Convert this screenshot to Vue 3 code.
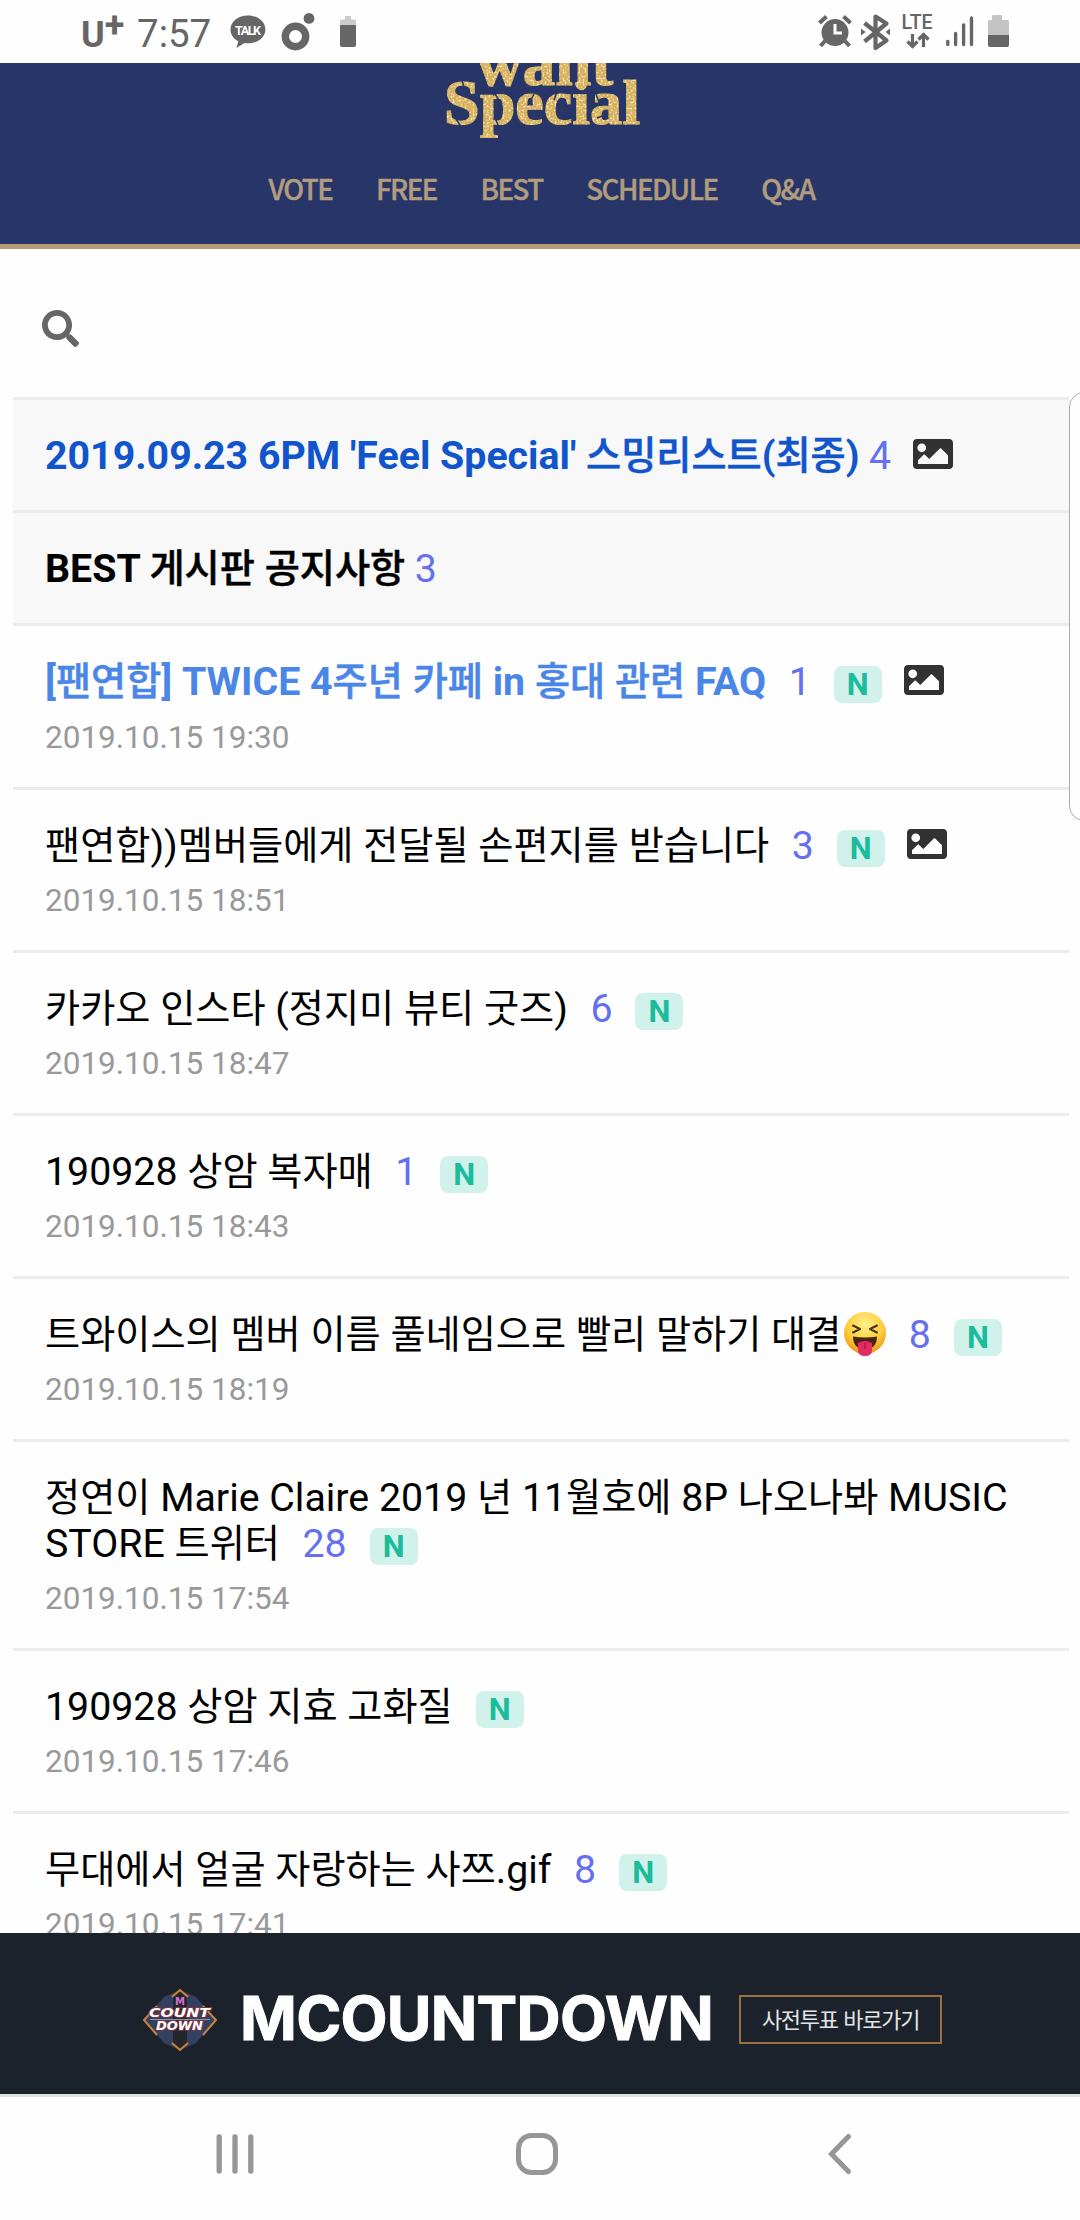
<script setup>
const menu = ['VOTE', 'FREE', 'BEST', 'SCHEDULE', 'Q&A']

const posts = [
  { title: "2019.09.23 6PM 'Feel Special' 스밍리스트(최종)", count: 4, photo: true, notice: true, tone: 'navy' },
  { title: 'BEST 게시판 공지사항', count: 3, notice: true, tone: 'strong' },
  { title: '[팬연합] TWICE 4주년 카페 in 홍대 관련 FAQ', count: 1, fresh: true, photo: true, tone: 'sky', date: '2019.10.15 19:30' },
  { title: '팬연합))멤버들에게 전달될 손편지를 받습니다', count: 3, fresh: true, photo: true, date: '2019.10.15 18:51' },
  { title: '카카오 인스타 (정지미 뷰티 굿즈)', count: 6, fresh: true, date: '2019.10.15 18:47' },
  { title: '190928 상암 복자매', count: 1, fresh: true, date: '2019.10.15 18:43' },
  { title: '트와이스의 멤버 이름 풀네임으로 빨리 말하기 대결', emoji: true, count: 8, fresh: true, date: '2019.10.15 18:19' },
  { title: '정연이 Marie Claire 2019 년 11월호에 8P 나오나봐 MUSIC STORE 트위터', count: 28, fresh: true, date: '2019.10.15 17:54' },
  { title: '190928 상암 지효 고화질', fresh: true, date: '2019.10.15 17:46' },
  { title: '무대에서 얼굴 자랑하는 사쯔.gif', count: 8, fresh: true, date: '2019.10.15 17:41' }
]

// Hangul runs get their own span so their size and weight can differ from the Latin text.
const runs = (text) =>
  text.split(/([가-힣]+)/).filter(Boolean).map((t) => ({ t, ko: /[가-힣]/.test(t) }))
</script>

<template>
  <div class="screen">
    <div class="status">
      <div class="left">
        <span class="carrier">U<span class="plus">+</span></span>
        <span class="time">7:57</span>
        <svg class="talk" width="36" height="34" viewBox="0 0 36 34">
          <path d="M18 0.5C8.200.5.5 6.500.5 14.500c0 5 3 9.300 7.800 11.800L6.500 33l8-5c1.200.2 2.300.3 3.500.3 9.700 0 17.400-6 17.400-13.800S27.700.5 18 .5z" fill="#666" />
          <text x="18" y="19.500" text-anchor="middle" font-size="12.500" font-weight="700" textLength="26" fill="#fff">TALK</text>
        </svg>
        <svg class="ring" width="34" height="38" viewBox="0 0 34 38">
          <circle cx="14.500" cy="23.500" r="10.200" fill="none" stroke="#666" stroke-width="7.400" />
          <circle cx="28" cy="5.400" r="5.400" fill="#666" />
        </svg>
        <svg class="cell" width="16" height="31" viewBox="0 0 16 31">
          <path d="M5 0h6v3.500h3.500q1.500 0 1.500 1.500V10H0V5q0-1.500 1.500-1.500H5z" fill="#ccc" />
          <path d="M0 9h16v20q0 2-2 2H2q-2 0-2-2z" fill="#666" />
        </svg>
      </div>
      <svg class="right" width="192" height="36" viewBox="0 0 192 36">
        <g fill="none" stroke="#666" stroke-width="4">
          <circle cx="18" cy="18.500" r="13.500" fill="#666" stroke="none" />
          <path d="M2.500 9l7-6.500M33.500 9l-7-6.500" />
          <path d="M8 27l-4.500 5M28 27l4.500 5" />
          <path d="M18 10v9h7" stroke="#fff" stroke-width="3" />
          <path d="M47.500 9l22 17.500-11 7.500V2.500l11 7-22 18" stroke-width="4.200" stroke-linejoin="round" />
        </g>
        <path d="M44 14.500l4.500 3.500-4.500 3.500zM73 14.500L68.500 18l4.500 3.500z" fill="#666" />
        <text x="84.500" y="15" font-size="19.500" font-weight="500" textLength="31" fill="#666">LTE</text>
        <path d="M95.500 20v12M90.500 27.500l5 5 5-5M106.500 33V21M101.500 25.500l5-5 5 5" fill="none" stroke="#666" stroke-width="3.200" />
        <path d="M130.800 27.500v3M138.600 19.500v11M146.600 11v19.500M154.500 4v26.500" stroke="#666" stroke-width="3.400" stroke-linecap="round" />
        <path d="M176 1h8q1 0 1 1v4h5.500q1.500 0 1.500 1.500V21h-21V7.500Q171 6 172.500 6h2.500V2q0-1 1-1z" fill="#c4c4c4" />
        <path d="M171 21h21v10q0 2-2 2h-17q-2 0-2-2z" fill="#666" />
      </svg>
    </div>

    <header class="head">
      <svg class="logo" width="200" height="78" viewBox="0 0 200 78">
        <defs>
          <filter id="glitter" x="0" y="0" width="100%" height="100%">
            <feTurbulence type="fractalNoise" baseFrequency="0.5" numOctaves="2" seed="4" />
            <feColorMatrix values="0 0 0 0 1  0 0 0 0 .94  0 0 0 0 .62  2.500 0 0 0 -1.150" />
            <feComposite in2="SourceAlpha" operator="in" result="spark" />
            <feMerge><feMergeNode in="SourceGraphic" /><feMergeNode in="spark" /></feMerge>
          </filter>
        </defs>
        <g fill="#d5ae55" stroke="#d5ae55" stroke-width="1.200" font-weight="700" filter="url(#glitter)">
          <text x="33" y="21" font-size="66" textLength="137" lengthAdjust="spacingAndGlyphs">want</text>
          <text x="1" y="59.500" font-size="64" textLength="196" lengthAdjust="spacingAndGlyphs">Special</text>
        </g>
        <path d="M19 16l2 7M13 55l6 9M52 30l4 6M52 54l4 9M91 30l-3 6M114 28l-3 8M153 30l3 8M154 54l8-3" stroke="#283569" stroke-width="1.500" />
      </svg>
      <nav class="menu">
        <a v-for="m in menu" :key="m">{{ m }}</a>
      </nav>
    </header>

    <div class="search">
      <svg width="37" height="37" viewBox="0 0 512 512">
        <path fill="#666" d="M505 442.700L405.300 343c-4.500-4.500-10.600-7-17-7H372c27.600-35.300 44-79.700 44-128C416 93.100 322.900 0 208 0S0 93.100 0 208s93.100 208 208 208c48.300 0 92.700-16.400 128-44v16.300c0 6.400 2.500 12.500 7 17l99.700 99.700c9.400 9.400 24.600 9.400 33.900 0l28.300-28.300c9.400-9.400 9.400-24.600.1-34zM208 336c-70.700 0-128-57.200-128-128 0-70.700 57.200-128 128-128 70.700 0 128 57.200 128 128 0 70.700-57.200 128-128 128z" />
      </svg>
    </div>

    <main class="list">
      <article v-for="p in posts" :key="p.title" class="post" :class="[p.tone, { notice: p.notice }]">
        <div class="line">
          <span class="title"><span v-for="(r, i) in runs(p.title)" :key="i" :class="{ ko: r.ko }">{{ r.t }}</span></span><svg v-if="p.emoji" class="emoji" width="42" height="44" viewBox="0 0 42 44">
            <defs>
              <radialGradient id="face" cx=".5" cy=".3" r=".7">
                <stop offset="0" stop-color="#fff08a" />
                <stop offset=".6" stop-color="#fdcf3d" />
                <stop offset="1" stop-color="#ee9413" />
              </radialGradient>
            </defs>
            <circle cx="21" cy="21" r="21" fill="url(#face)" />
            <path d="M9 13.500l7 3.500-7 3.500M33 13.500L26 17l7 3.500" fill="none" stroke="#4a3210" stroke-width="2" stroke-linecap="round" stroke-linejoin="round" />
            <path d="M9 24.500q12 2 24 0Q33 37 21 37T9 24.500z" fill="#4b2412" />
            <path d="M14 31q7-4 14 0v7q0 6-7 6t-7-6z" fill="#e02c62" />
            <path d="M21 31v6" stroke="#b5164a" stroke-width="1.500" />
          </svg><span v-if="p.count" class="count">{{ p.count }}</span><span v-if="p.fresh" class="fresh">N</span><svg v-if="p.photo" class="photo" width="40" height="30" viewBox="0 64 512 384">
            <path fill="#323232" d="M464 448H48c-26.510 0-48-21.490-48-48V112c0-26.510 21.490-48 48-48h416c26.510 0 48 21.490 48 48v288c0 26.510-21.490 48-48 48zM112 120c-30.928 0-56 25.072-56 56s25.072 56 56 56 56-25.072 56-56-25.072-56-56-56zM64 384h384V272l-87.515-87.515c-4.686-4.686-12.284-4.686-16.971 0L208 320l-55.515-55.515c-4.686-4.686-12.284-4.686-16.971 0L64 336v48z" />
          </svg>
        </div>
        <div v-if="p.date" class="date">{{ p.date }}</div>
      </article>
    </main>

    <footer class="banner">
      <svg class="badge" width="76" height="62" viewBox="0 0 76 62">
        <path d="M38 1L54 8 60 15 75 31 60 47 54 54 38 61 22 54 16 47 1 31 16 15 22 8z" fill="#34405f" />
        <path d="M31 7l7-6 7 6v48l-7 6-7-6z" fill="#25262c" />
        <path d="M30 8l8-7 8 7M30 54l8 7 8-7M15 17L2 31l13 15M61 17l13 14-13 15" fill="none" stroke="#c9833a" stroke-width="2" />
        <text x="38" y="15.500" font-size="10" text-anchor="middle" fill="#d66fd8">M</text>
        <g fill="#fff" stroke="#7a3540" stroke-width="2" paint-order="stroke" font-style="italic" font-size="12.500">
          <text x="7" y="28" textLength="61" lengthAdjust="spacingAndGlyphs">COUNT</text>
          <text x="14" y="41" textLength="47" lengthAdjust="spacingAndGlyphs">DOWN</text>
        </g>
        <path d="M8 30.500h60" stroke="#8e93b8" stroke-width="1" />
      </svg>
      <span class="brand">MCOUNTDOWN</span>
      <span class="cta">사전투표 바로가기</span>
    </footer>

    <div class="keys">
      <svg width="38" height="42" viewBox="0 0 38 42"><path d="M3.200 4v34M19 4v34M34.800 4v34" stroke="#969696" stroke-width="5.300" stroke-linecap="round" /></svg>
      <svg width="42" height="42" viewBox="0 0 42 42"><rect x="2.500" y="2.500" width="37" height="37" rx="13" fill="none" stroke="#969696" stroke-width="5" /></svg>
      <svg width="24" height="42" viewBox="0 0 24 42"><path d="M20.500 3.500L3.500 21l17 17.500" fill="none" stroke="#969696" stroke-width="5" stroke-linecap="round" /></svg>
    </div>

    <div class="edge"></div>
  </div>
</template>

<style>
body {
  margin: 0;
  background: #fff;
}
</style>

<style scoped>
.screen {
  position: relative;
  display: flex;
  flex-direction: column;
  width: 1080px;
  height: 2220px;
  overflow: hidden;
  background: #fefefe;
  font-family: Roboto, "Noto Sans CJK KR", sans-serif;
}
svg {
  display: block;
  flex: none;
  overflow: visible;
}
.status {
  display: flex;
  justify-content: space-between;
  height: 63px;
  flex: none;
  padding: 0 72px 0 81px;
  color: #666;
}
.left {
  display: flex;
  align-items: flex-start;
}
.carrier {
  width: 56px;
  font-size: 36px;
  font-weight: 700;
  line-height: 70px;
  white-space: nowrap;
}
.plus {
  position: relative;
  top: -10px;
  font-size: 36px;
}
.time {
  width: 93px;
  font-size: 38.5px;
  line-height: 67px;
}
.talk {
  margin-top: 15px;
}
.ring {
  margin: 13px 0 0 15px;
}
.cell {
  margin: 16px 0 0 25px;
}
.right {
  margin-top: 14px;
  margin-right: -1px;
}
.head {
  box-sizing: border-box;
  height: 186px;
  flex: none;
  overflow: hidden;
  background: #283569;
  border-bottom: 5px solid #b59d78;
}
.logo {
  margin: 1px auto 0;
  position: relative;
  left: 3px;
  font-family: "Liberation Serif", serif;
}
.menu {
  display: flex;
  justify-content: center;
  gap: 43.5px;
  margin: 26px 0 0 3px;
  font: 500 27.7px/40px "Noto Sans CJK KR", sans-serif;
  letter-spacing: -1.5px;
  color: #b29c7e;
  -webkit-text-stroke: 0.4px #b29c7e;
}
.search {
  box-sizing: border-box;
  height: 148px;
  flex: none;
  padding: 61px 42px 0;
}
.list {
  height: 1536px;
  flex: none;
  margin: 0 11px 0 13px;
  overflow: hidden;
}
.post {
  padding: 33px 32px 31px;
  border-top: 3px solid #ececec;
}
.notice {
  background: #f8f8f8;
}
.line {
  font-size: 39.3px;
  line-height: 46px;
  color: #000;
}
.ko {
  font-size: 38.2px;
  line-height: 40px;
}
.navy .title,
.strong .title,
.sky .title {
  font-weight: 700;
}
.navy .ko,
.strong .ko,
.sky .ko {
  font-weight: 500;
  -webkit-text-stroke: 0.5px currentColor;
}
.navy .title {
  color: #1155cc;
}
.sky .title {
  color: #4a86e8;
}
.emoji,
.photo {
  display: inline-block;
}
.emoji {
  margin-left: 3px;
  vertical-align: -8px;
}
.photo {
  margin-left: 22px;
  vertical-align: 0;
}
.count {
  margin-left: 22.5px;
  color: #6470f0;
}
.notice .count {
  margin-left: 9.5px;
}
.fresh {
  display: inline-block;
  width: 48px;
  margin-left: 23px;
  border-radius: 8px;
  background: #d1f2ea;
  color: #1abc9c;
  font-size: 31px;
  font-weight: 700;
  line-height: 37px;
  text-align: center;
}
.date {
  margin-top: 13px;
  font-size: 31.5px;
  line-height: 37px;
  color: #999;
}
.sky .date {
  margin-top: 14px;
}
.banner {
  display: flex;
  align-items: center;
  height: 161px;
  flex: none;
  padding: 0 0 0 142px;
  box-sizing: border-box;
  background: #1b222b;
}
.badge {
  margin-top: 13px;
  font-family: "DejaVu Sans", sans-serif;
  font-weight: 700;
}
.brand {
  width: 499px;
  margin: 9px 0 0 22px;
  font: 700 61px/70px Inter, sans-serif;
  letter-spacing: -0.7px;
  color: #fff;
  -webkit-text-stroke: 1px #fff;
}
.cta {
  box-sizing: border-box;
  width: 203px;
  height: 49px;
  margin-top: 11px;
  border: 2px solid #9c6f40;
  color: #e4e4e6;
  font: 400 22px/43px "Noto Sans CJK KR", sans-serif;
  letter-spacing: -1.3px;
  word-spacing: 2px;
  text-align: center;
  white-space: nowrap;
}
.keys {
  box-sizing: border-box;
  display: flex;
  align-items: flex-start;
  height: 126px;
  padding: 36px 0 0 216px;
  border-top: 3px solid #e0e0e0;
  background: #fefefe;
}
.keys svg + svg {
  margin-left: 262px;
}
.keys svg + svg + svg {
  margin-left: 270px;
}
.edge {
  position: absolute;
  top: 392px;
  left: 1069px;
  box-sizing: border-box;
  width: 30px;
  height: 429px;
  border: 1.5px solid #aaa;
  border-radius: 18px;
  background: #fefefe;
}
</style>
